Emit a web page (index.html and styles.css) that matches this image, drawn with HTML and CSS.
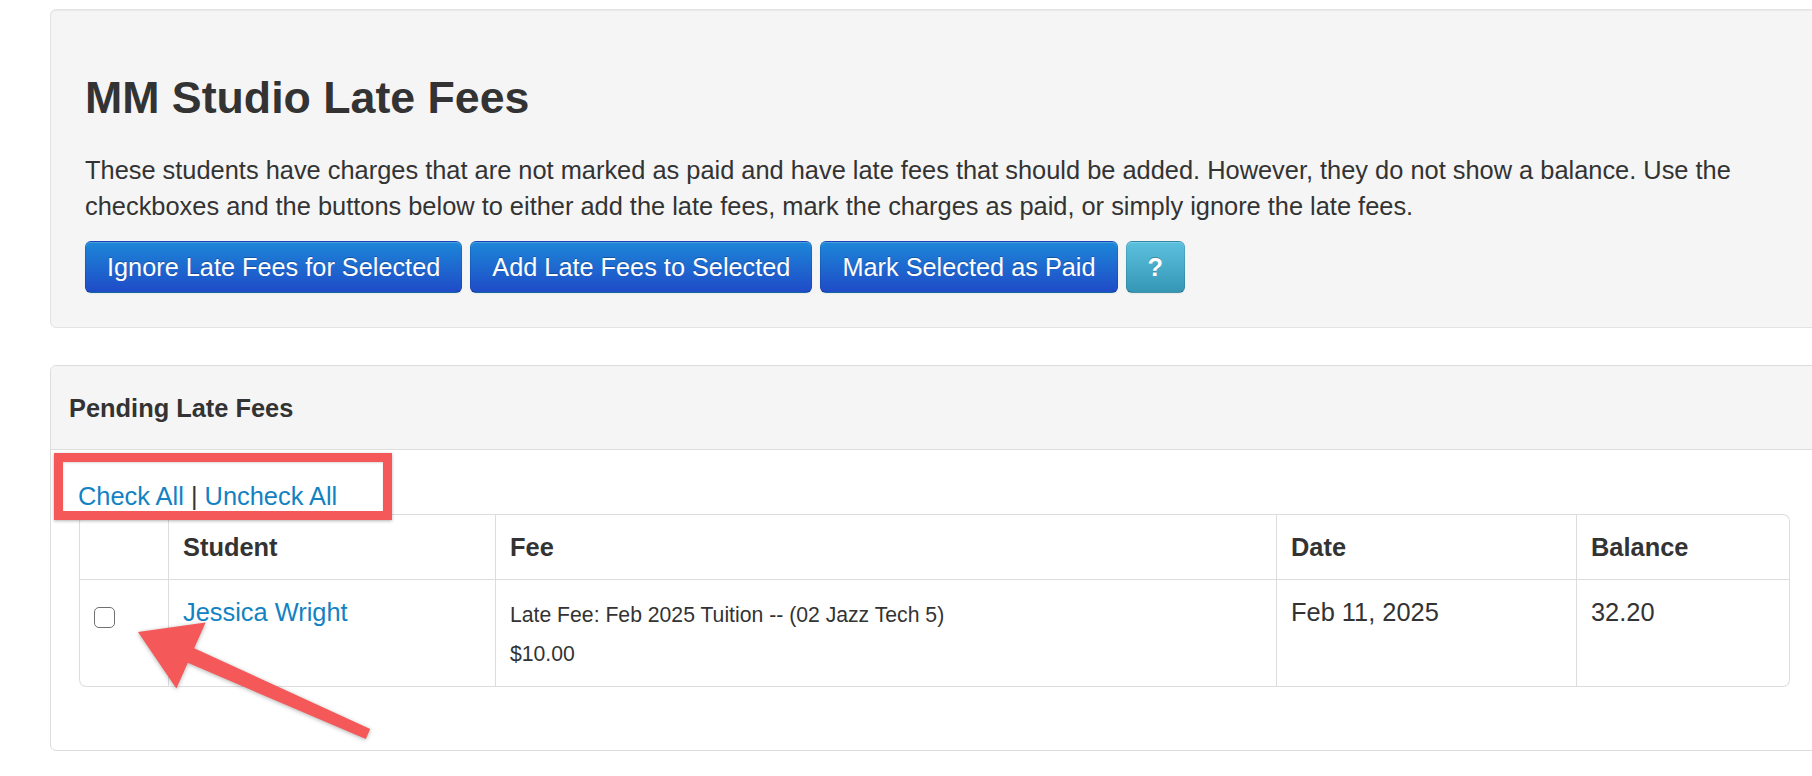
FILE: index.html
```html
<!DOCTYPE html>
<html lang="en">
<head>
<meta charset="utf-8">
<title>MM Studio Late Fees</title>
<link rel="stylesheet" href="styles.css">
</head>
<body>
<div class="page">
  <section class="well">
    <h1 class="title">MM Studio Late Fees</h1>
    <p class="intro">These students have charges that are not marked as paid and have late fees that should be added. However, they do not show a balance. Use the checkboxes and the buttons below to either add the late fees, mark the charges as paid, or simply ignore the late fees.</p>
    <div class="actions">
      <button class="btn btn-primary" type="button">Ignore Late Fees for Selected</button>
      <button class="btn btn-primary" type="button">Add Late Fees to Selected</button>
      <button class="btn btn-primary" type="button">Mark Selected as Paid</button>
      <button class="btn btn-info btn-help" type="button">?</button>
    </div>
  </section>

  <section class="panel">
    <div class="panel-heading">Pending Late Fees</div>
    <div class="panel-body">
      <div class="check-links"><a href="#" class="link">Check All</a> | <a href="#" class="link">Uncheck All</a></div>
      <table class="fees-table">
        <colgroup>
          <col class="c-check">
          <col class="c-student">
          <col class="c-fee">
          <col class="c-date">
          <col class="c-balance">
        </colgroup>
        <thead>
          <tr>
            <th></th>
            <th>Student</th>
            <th>Fee</th>
            <th>Date</th>
            <th>Balance</th>
          </tr>
        </thead>
        <tbody>
          <tr>
            <td><input type="checkbox" class="row-check" aria-label="Select Jessica Wright"></td>
            <td><a href="#" class="link">Jessica Wright</a></td>
            <td class="fee-cell">
              <div>Late Fee: Feb 2025 Tuition -- (02 Jazz Tech 5)</div>
              <div>$10.00</div>
            </td>
            <td>Feb 11, 2025</td>
            <td>32.20</td>
          </tr>
        </tbody>
      </table>
    </div>
  </section>

  <div class="annot-box"></div>
  <svg class="annot-arrow" width="1812" height="776" viewBox="0 0 1812 776" aria-hidden="true">
    <polygon points="138,632 205.6,622.6 194.2,648.2 370.2,729 365.8,739 187.8,662.8 176.4,688.4" fill="#f55858"/>
  </svg>
</div>
</body>
</html>
```

FILE: styles.css
```css
html, body {
  margin: 0;
  padding: 0;
  background: #ffffff;
  overflow: hidden;
}

body {
  font-family: "Helvetica Neue", Helvetica, "Liberation Sans", Arial, sans-serif;
  font-size: 25.4px;
  line-height: 35px;
  color: #333333;
}

.page {
  position: relative;
  width: 1812px;
  height: 776px;
  padding: 9px 0 0 50px;
  box-sizing: border-box;
}

.well {
  width: 1768px;
  box-sizing: border-box;
  background: #f5f5f5;
  border: 1px solid #e3e3e3;
  border-radius: 6px;
  box-shadow: inset 0 1px 1px rgba(0, 0, 0, 0.05);
  padding: 64px 35px 34px 34px;
  margin-bottom: 37px;
}

.title {
  margin: 0;
  font-size: 44.7px;
  line-height: 48px;
  font-weight: bold;
  color: #333333;
}

.intro {
  margin: 30px 0 17px;
  font-size: 25.4px;
  line-height: 36px;
}

.actions {
  display: flex;
  gap: 8px;
}

.btn {
  font-family: inherit;
  font-size: 25.3px;
  line-height: 36px;
  padding: 7px 21px;
  border-radius: 6px;
  color: #ffffff;
  text-shadow: 0 -1px 0 rgba(0, 0, 0, 0.25);
  border: 1px solid;
  border-color: rgba(0, 0, 0, 0.1) rgba(0, 0, 0, 0.1) rgba(0, 0, 0, 0.25);
  box-shadow: inset 0 1px 0 rgba(255, 255, 255, 0.2), 0 1px 2px rgba(0, 0, 0, 0.05);
  cursor: pointer;
  margin: 0;
}

.btn-primary {
  background-color: #1f66d0;
  background-image: linear-gradient(to bottom, #1c87d8, #1f4bc7);
}

.btn-info {
  background-color: #49afcd;
  background-image: linear-gradient(to bottom, #5bc0de, #3597b5);
}

.btn-help {
  font-weight: bold;
}

.panel {
  width: 1768px;
  box-sizing: border-box;
  border: 1px solid #dddddd;
  border-radius: 6px;
  background: #ffffff;
}

.panel-heading {
  background: #f5f5f5;
  border-bottom: 1px solid #dddddd;
  border-radius: 6px 6px 0 0;
  padding: 25px 18px 23px;
  font-weight: bold;
  font-size: 25.4px;
  line-height: 35px;
}

.panel-body {
  padding: 29px 28px 28px 27px;
}

.check-links {
  line-height: 35px;
}

.link {
  color: #1282c2;
  text-decoration: none;
}

.fees-table {
  width: 1710px;
  border-collapse: separate;
  border-spacing: 0;
  border: 1px solid #dddddd;
  border-left: 0;
  border-radius: 7px;
  margin-bottom: 35px;
  table-layout: fixed;
  margin-left: 1px;
}

.c-check { width: 89px; }
.c-student { width: 327px; }
.c-fee { width: 781px; }
.c-date { width: 300px; }
.c-balance { width: 213px; }

.fees-table th,
.fees-table td {
  text-align: left;
  vertical-align: top;
  padding: 14px;
  line-height: 35px;
  border-left: 1px solid #dddddd;
}

.fees-table th {
  font-weight: bold;
  padding-top: 15px;
}

.fees-table td {
  border-top: 1px solid #dddddd;
  padding-top: 15px;
  padding-bottom: 13px;
}

.fees-table thead tr:first-child th:first-child {
  border-top-left-radius: 7px;
}

.fees-table tbody tr:last-child td:first-child {
  border-bottom-left-radius: 7px;
}

.fee-cell {
  font-size: 21.2px;
}

.fee-cell div {
  line-height: 39px;
}

.row-check {
  appearance: none;
  -webkit-appearance: none;
  display: block;
  width: 21px;
  height: 21px;
  margin: 12px 0 0 0;
  border: 1.5px solid #707070;
  border-radius: 5px;
  background: #ffffff;
  box-sizing: border-box;
}

.annot-box {
  position: absolute;
  left: 54px;
  top: 453px;
  width: 338px;
  height: 67px;
  box-sizing: border-box;
  border: 9px solid #f55858;
  box-shadow: 0 1px 3px rgba(0, 0, 0, 0.3), inset 0 1px 2px rgba(0, 0, 0, 0.15);
  pointer-events: none;
}

.annot-arrow {
  position: absolute;
  left: 0;
  top: 0;
  pointer-events: none;
  filter: drop-shadow(0 1px 2px rgba(0, 0, 0, 0.3));
}
```
